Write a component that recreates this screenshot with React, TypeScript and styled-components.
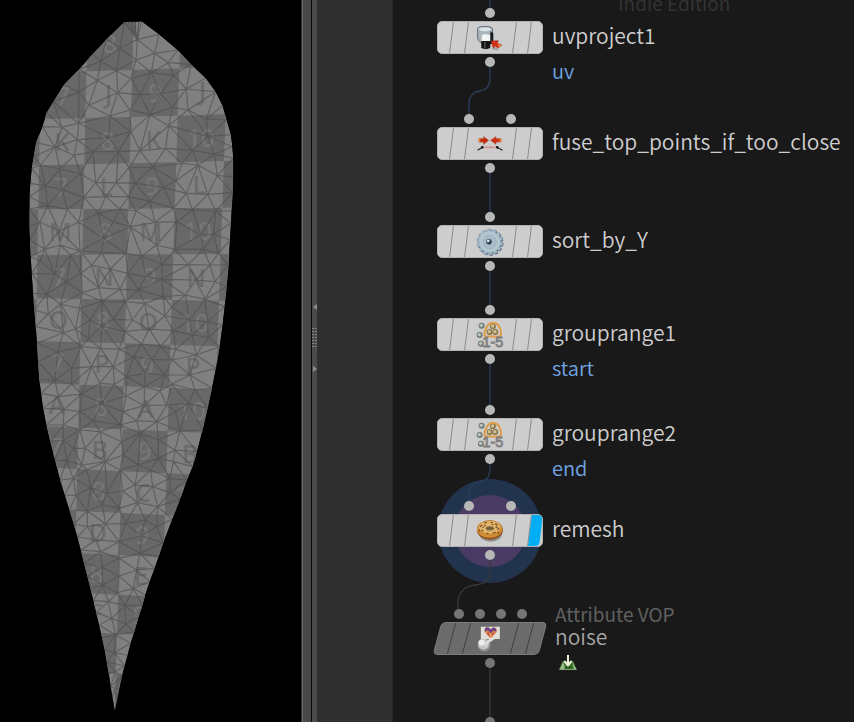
import React from "react";
import styled, { createGlobalStyle } from "styled-components";

const GlobalStyle = createGlobalStyle`
  *, *::before, *::after { box-sizing: border-box; }
  body { margin: 0; background: #000; }
`;

/* ---------- page frame ---------- */

const Page = styled.main`
  display: flex;
  min-height: 100vh;
  overflow: hidden;
  font-family: "Noto Sans CJK SC", "Noto Sans", sans-serif;
  background: #000;
`;

const Viewport = styled.section`
  flex: 301 1 0;
  min-width: 0;
  background: #000;
`;

const MeshSvg = styled.svg`
  display: block;
  width: 100%;
  height: auto;
`;

const ScrollEdge = styled.div`
  flex: none;
  width: 10px;
  background: #484848;
  border-left: 1px solid #333;
  box-shadow: inset 1px 0 #6a6a6a;
`;

const Splitter = styled.div`
  flex: none;
  display: flex;
  flex-direction: column;
  align-items: center;
  justify-content: center;
  gap: 18px;
  width: 6px;
  padding-bottom: 46px;
  background: #4b4b4b;
  border-left: 1px solid #080808;
`;

const Arrow = styled.svg`
  display: block;
  width: 4px;
  height: 6px;
  fill: #8c8c8c;
`;

const Grip = styled.svg`
  display: block;
  width: 5px;
  height: 20px;
  fill: #858585;
`;

const Gutter = styled.div`
  flex: none;
  width: 76px;
  background: #303030;
  border-right: 1px solid #262626;
`;

const Canvas = styled.section`
  position: relative;
  flex: 461 1 0;
  min-width: 0;
  overflow: hidden;
  background: #191919;
`;

/* ---------- node graph ---------- */

const Wires = styled.svg`
  position: absolute;
  left: 0;
  top: 0;
  width: 461px;
  height: 722px;
  fill: none;
`;

const Watermark = styled.span`
  position: absolute;
  left: 225px;
  top: -12px;
  font-size: 19px;
  line-height: 30px;
  color: #333;
`;

const NodeBox = styled.article<{ $x: number; $y: number }>`
  position: absolute;
  left: ${(p) => p.$x}px;
  top: ${(p) => p.$y}px;
  display: flex;
  align-items: flex-start;
  gap: 9px;
  white-space: nowrap;
`;

const NodeStack = styled.div`
  display: flex;
  flex-direction: column;
  align-items: center;
  gap: 3px;
  width: 106px;
`;

const Ports = styled.div<{ $gap: number }>`
  display: flex;
  justify-content: center;
  gap: ${(p) => p.$gap}px;
`;

const Port = styled.i<{ $dim?: boolean }>`
  width: 10px;
  height: 10px;
  border-radius: 50%;
  background: ${(p) => (p.$dim ? "#757575" : "#b7b7b7")};
`;

const Body = styled.button<{ $dim?: boolean }>`
  display: grid;
  grid-template-columns: 14px 15px 48px 15px 1fr;
  width: 106px;
  height: 33px;
  padding: 0;
  overflow: hidden;
  border: 1px solid ${(p) => (p.$dim ? "#7c7c7c" : "#b2b2b2")};
  border-radius: 5px;
  background: ${(p) => (p.$dim ? "#6b6b6b" : "#cdcdcd")};
  transform: ${(p) => (p.$dim ? "skewX(-15deg)" : "none")};
`;

const Segment = styled.span<{ $dim?: boolean; $flag?: boolean }>`
  display: flex;
  align-items: center;
  justify-content: center;
  height: 31px;
  transform: ${(p) => (p.$dim ? "none" : "skewX(-7deg)")};
  border-right: 1px solid ${(p) => (p.$dim ? "#3f3f3f" : "#8a8a8a")};
  &:last-child {
    border-right: 0;
    margin-right: ${(p) => (p.$flag ? "1px" : "0")};
    background: ${(p) => (p.$flag ? "#00aef5" : "transparent")};
    border-radius: ${(p) => (p.$flag ? "0 3px 4px 0" : "0")};
  }
`;

const IconSvg = styled.svg<{ $dim?: boolean }>`
  flex: none;
  width: 28px;
  height: 28px;
  margin-right: 1px;
  transform: ${(p) => (p.$dim ? "skewX(15deg)" : "skewX(7deg)")};
`;

const Labels = styled.div<{ $typed?: boolean }>`
  display: flex;
  flex-direction: column;
  align-items: flex-start;
  padding-left: ${(p) => (p.$typed ? "3px" : "0")};
  padding-top: ${(p) => (p.$typed ? "0" : "10px")};
  margin-top: ${(p) => (p.$typed ? "-6px" : "0")};
`;

const Name = styled.span<{ $dim?: boolean }>`
  font-size: 21px;
  font-weight: 350;
  line-height: ${(p) => (p.$dim ? "22px" : "34px")};
  color: ${(p) => (p.$dim ? "#a6a6a6" : "#cecece")};
`;

const Group = styled.span`
  margin-top: 1px;
  font-size: 20px;
  font-weight: 350;
  line-height: 36px;
  color: #70a5e4;
`;

const TypeName = styled.span`
  font-size: 19px;
  line-height: 22px;
  color: #606060;
`;

const Badge = styled.svg`
  width: 18px;
  height: 15px;
  margin: 8px 0 0 4px;
`;

/* ---------- icons ---------- */

type IconName = "project" | "fuse" | "gear" | "range" | "donut" | "vop";

const gearPath = (() => {
  const pts: string[] = [];
  const teeth = 14;
  for (let i = 0; i < teeth; i++) {
    const a = (i / teeth) * Math.PI * 2;
    const s = (Math.PI * 2) / teeth;
    [[0, 33], [0.1, 39], [0.65, 39], [0.75, 33]].forEach(([t, r]) => {
      pts.push(`${(42 + Math.cos(a + t * s) * r).toFixed(1)},${(42 + Math.sin(a + t * s) * r).toFixed(1)}`);
    });
  }
  return `M${pts.join("L")}Z`;
})();

const drawings: Record<IconName, React.ReactNode> = {
  project: (
    <>
      <path d="M5 15Q5 7 27 7Q50 7 50 16V55Q36 62 14 56Q6 50 5 42Z" fill="#a9b5bd" stroke="#56606a" strokeWidth="2.5" />
      <ellipse cx="27" cy="16" rx="20" ry="7" fill="#dce3e7" stroke="#7c8992" />
      <path d="M44 22L52 28V57L40 62Z" fill="#17191b" />
      <path d="M16 34H43V72Q29 79 16 72Z" fill="#141414" />
      <path d="M16 34Q28 28 43 34V51H16Z" fill="#f3f4f4" />
      <path d="M27 53V74" stroke="#666" strokeWidth="3" />
      <path d="M45 74L58 68L70 78Q57 80 45 74Z" fill="#8a8580" opacity=".6" />
      <path d="M45 51L67 50L64 58L78 63L66 72L58 66L52 72Z" fill="#d33119" stroke="#8e1c10" strokeWidth="1.5" />
      <path d="M66 59L78 63L68 69Z" fill="#f1893a" />
    </>
  ),
  fuse: (
    <>
      <path d="M9 26H23V20L38 31L23 43V36H9Z" fill="#c9240f" stroke="#a85832" strokeWidth="2" />
      <path d="M75 26H60V20L44 31L60 43V36H75Z" fill="#d32b12" stroke="#a85832" strokeWidth="2" />
      <path d="M7 31H13M71 31H77" stroke="#ef8b45" strokeWidth="8" />
      <path d="M5 61L21 51M61 51L80 61" stroke="#262626" strokeWidth="3.5" />
      <circle cx="19" cy="52" r="4" fill="#151515" />
      <circle cx="64" cy="52" r="4" fill="#151515" />
      <path d="M25 52H58" stroke="#df9b9b" strokeWidth="7" strokeDasharray="5 2" />
      <path d="M28 52H56" stroke="#a95555" strokeWidth="2" strokeDasharray="3 4" />
    </>
  ),
  gear: (
    <>
      <path d={gearPath} fill="#4c6076" transform="translate(2 2)" />
      <path d={gearPath} fill="#a3b7c4" stroke="#7388a0" strokeWidth="1.5" />
      <circle cx="41" cy="41" r="31" fill="#b3c5cf" />
      <circle cx="41" cy="42" r="20" fill="#a9bcc9" stroke="#8da2b2" strokeWidth="1.5" />
      <circle cx="39" cy="41" r="9" fill="#56697d" />
      <circle cx="40" cy="42" r="6" fill="#26364b" />
      <circle cx="37" cy="39" r="4" fill="#dce7ed" />
    </>
  ),
  range: (
    <>
      {[[17, 14], [11, 42], [15, 68], [51, 16], [41, 33], [58, 33]].map(([x, y], i) => (
        <g key={i}>
          <circle cx={x} cy={y} r="9" fill={i > 2 ? "#8a7748" : "#6f7b75"} />
          <circle cx={x - 1} cy={y - 1} r="5" fill={i > 2 ? "#d0c295" : "#bdc8c3"} />
        </g>
      ))}
      <path d="M28 46Q22 38 30 24Q37 4 51 5Q66 5 72 22Q80 41 70 47Z" fill="none" stroke="#df9c47" strokeWidth="6" />
      <text x="20" y="77" fontFamily="Liberation Sans, sans-serif" fontSize="43" fill="#cfcfcf" stroke="#7c7c7c" strokeWidth="3">1-5</text>
    </>
  ),
  donut: (
    <>
      <ellipse cx="44" cy="52" rx="34" ry="22" fill="#6c6c6c" opacity=".65" />
      <ellipse cx="42" cy="39" rx="39" ry="29" fill="#8f5119" />
      <ellipse cx="41" cy="36" rx="38" ry="26" fill="#cf8c36" />
      <ellipse cx="41" cy="31" rx="32" ry="19" fill="#dfb46c" />
      <ellipse cx="42" cy="34" rx="12" ry="6" fill="#75603c" />
      <path d="M32 38Q42 44 54 37L51 42Q42 46 33 42Z" fill="#c59952" />
      <path d="M12 29l7-5M17 39l5 4M25 19l8-4M31 49l7 1M51 49l8-4M64 38l5-5M58 20l7 5M44 16l6 1M20 32l4-2M9 38l3 6M69 45l-4 5M48 22l5 1M25 25l5 2M59 30l6 1" stroke="#80521f" strokeWidth="4" />
    </>
  ),
  vop: (
    <>
      <circle cx="25" cy="60" r="20" fill="#888" />
      <circle cx="23" cy="57" r="17" fill="#c2c2c2" />
      <circle cx="18" cy="53" r="9" fill="#eee" />
      <path d="M15 5H72V42H57L35 56L29 68L27 54L40 42H15Z" fill="#dfdfd8" />
      <path d="M44 39L27 22Q24 10 33 7Q41 7 44 14Q49 6 57 8Q66 14 61 24Z" fill="#d88b52" />
      <path d="M27 20Q24 9 33 7Q41 7 44 14Q49 6 57 8Q64 13 61 20L53 16L44 25L36 15Z" fill="#713e88" />
      <path d="M36 18L44 32L53 18L54 27L44 39L34 29Z" fill="#ca493f" />
      <path d="M38 25L44 31L50 25L44 38Z" fill="#f0c25c" />
    </>
  ),
};

const Icon = ({ name, dim }: { name: IconName; dim?: boolean }) => (
  <IconSvg viewBox="0 0 84 84" $dim={dim} aria-hidden="true">{drawings[name]}</IconSvg>
);

/* ---------- nodes ---------- */

interface NodeData {
  name: string;
  y: number;
  icon: IconName;
  inputs: number;
  group?: string;
  type?: string;
  flag?: boolean;
  dim?: boolean;
}

const nodes: NodeData[] = [
  { name: "uvproject1", y: 8, icon: "project", inputs: 1, group: "uv" },
  { name: "fuse_top_points_if_too_close", y: 114, icon: "fuse", inputs: 2 },
  { name: "sort_by_Y", y: 212, icon: "gear", inputs: 1 },
  { name: "grouprange1", y: 305, icon: "range", inputs: 1, group: "start" },
  { name: "grouprange2", y: 405, icon: "range", inputs: 1, group: "end" },
  { name: "remesh", y: 501, icon: "donut", inputs: 2, flag: true },
  { name: "noise", y: 609, icon: "vop", inputs: 4, type: "Attribute VOP", dim: true },
];

const GraphNode = ({ node }: { node: NodeData }) => (
  <NodeBox $x={44} $y={node.y}>
    <NodeStack>
      <Ports $gap={node.inputs === 2 ? 32 : 11}>
        {Array.from({ length: node.inputs }, (_, i) => <Port key={i} $dim={node.dim} />)}
      </Ports>
      <Body type="button" $dim={node.dim} aria-label={node.name}>
        <Segment $dim={node.dim} />
        <Segment $dim={node.dim} />
        <Segment $dim={node.dim}><Icon name={node.icon} dim={node.dim} /></Segment>
        <Segment $dim={node.dim} />
        <Segment $dim={node.dim} $flag={node.flag} />
      </Body>
      <Port $dim={node.dim} />
    </NodeStack>
    <Labels $typed={!!node.type}>
      {node.type && <TypeName>{node.type}</TypeName>}
      <Name $dim={node.dim}>{node.name}</Name>
      {node.group && <Group>{node.group}</Group>}
      {node.type && (
        <Badge viewBox="0 0 54 45" aria-hidden="true">
          <path d="M10 18H43L53 45H0Z" fill="#3b722b" />
          <path d="M2 43L13 20L19 43Z" fill="#9abb87" />
          <path d="M14 43L27 28L42 43Z" fill="#235b12" />
          <path d="M40 20L52 43H45Z" fill="#a5c790" />
          <path d="M1 43H53" stroke="#91aa85" strokeWidth="3" />
          <path d="M27 0V30M16 18L27 31L38 18" fill="none" stroke="#eef1dc" strokeWidth="6" />
        </Badge>
      )}
    </Labels>
  </NodeBox>
);

/* ---------- leaf mesh ---------- */

type Pt = [number, number];

const outline: Pt[] = [
  [373, 66], [400, 65], [425, 64], [477, 103], [533, 150], [573, 193], [617, 234], [647, 275], [668, 317],
  [680, 360], [693, 404], [697, 440], [700, 474], [700, 530], [698, 578], [695, 633], [693, 670], [690, 720],
  [686, 795], [680, 860], [674, 920], [668, 975], [659, 1040], [648, 1105], [636, 1165], [623, 1225],
  [608, 1290], [591, 1355], [578, 1400], [561, 1440], [540, 1498], [517, 1558], [490, 1628], [476, 1670],
  [464, 1705], [449, 1745], [436, 1785], [427, 1817], [416, 1850], [403, 1895], [392, 1930], [383, 1965],
  [374, 1998], [366, 2028], [358, 2065], [351, 2100], [344, 2132], [338, 2096], [332, 2060], [326, 2020],
  [320, 1985], [314, 1950], [306, 1913], [297, 1875], [288, 1838], [280, 1802], [271, 1765], [262, 1729],
  [252, 1690], [242, 1650], [232, 1611], [221, 1572], [208, 1530], [194, 1485], [180, 1440], [165, 1380],
  [151, 1325], [139, 1275], [129, 1225], [123, 1180], [118, 1140], [114, 1085], [111, 1030], [107, 980],
  [103, 930], [99, 880], [95, 820], [92, 770], [90, 720], [88, 680], [88, 627], [88, 590], [91, 550],
  [95, 505], [101, 470], [108, 428], [127, 380], [140, 338], [160, 305], [192, 254], [237, 208],
  [278, 162], [320, 118],
];

const inner: Pt[] = [
  [412, 118], [360, 144], [408, 180], [464, 160], [302, 184], [505, 188], [350, 212], [292, 241], [393, 236],
  [454, 218], [521, 226], [237, 276], [353, 278], [482, 281], [559, 267], [420, 284], [266, 316], [389, 330],
  [517, 322], [186, 381], [236, 370], [330, 348], [450, 344], [564, 330], [619, 357], [506, 377], [393, 395],
  [327, 413], [232, 419], [165, 441], [623, 409], [578, 451], [497, 445], [420, 452], [355, 455], [279, 455],
  [223, 466], [643, 463], [122, 495], [241, 521], [387, 503], [458, 501], [546, 490], [594, 495], [652, 527],
  [180, 507], [136, 558], [186, 568], [287, 548], [349, 548], [405, 550], [490, 562], [527, 543], [252, 592],
  [317, 590], [559, 580], [623, 583], [385, 590], [450, 604], [143, 617], [202, 628], [295, 640], [360, 627],
  [408, 633], [520, 625], [578, 630], [647, 633], [120, 667], [236, 667], [178, 692], [340, 665], [391, 680],
  [465, 667], [531, 665], [603, 705], [641, 702],
  [134, 748], [180, 735], [240, 753], [310, 715], [305, 758], [378, 760], [425, 768], [470, 735], [525, 748],
  [610, 748], [655, 760], [565, 794], [487, 793], [630, 795], [120, 782], [212, 765], [165, 822],
  [275, 796], [331, 807], [383, 820], [243, 820], [437, 830], [485, 838], [587, 840], [645, 845], [200, 845],
  [360, 868], [296, 863], [247, 878], [140, 882], [415, 870], [490, 890], [556, 885], [615, 898], [182, 912],
  [238, 925], [306, 904], [376, 905], [435, 910], [145, 942], [270, 960], [340, 958], [397, 960], [495, 948],
  [515, 920], [568, 960], [622, 965], [227, 987], [190, 998], [305, 978], [265, 1017], [375, 995], [447, 987],
  [520, 992], [577, 1005], [625, 1012], [173, 1056], [215, 1105], [243, 1040],
  [302, 1045], [357, 1048], [425, 1032], [482, 1040], [527, 1048], [588, 1065], [516, 1080], [455, 1078],
  [402, 1070], [275, 1100], [340, 1100], [435, 1120], [380, 1130], [495, 1125], [570, 1125], [165, 1140],
  [215, 1152], [300, 1150], [343, 1153], [245, 1182], [175, 1190], [305, 1210], [378, 1188], [433, 1160],
  [480, 1173], [515, 1152], [500, 1215], [433, 1217], [565, 1210], [585, 1170], [370, 1235], [240, 1235],
  [192, 1228], [280, 1262], [410, 1262], [360, 1275], [470, 1265], [527, 1235], [540, 1293], [190, 1275],
  [240, 1290], [300, 1295], [365, 1325], [420, 1300], [475, 1320], [525, 1350], [220, 1345], [255, 1345],
  [190, 1320], [315, 1385], [370, 1365], [415, 1395], [475, 1375], [520, 1385], [245, 1395], [200, 1382],
  [260, 1410], [360, 1410], [220, 1435], [510, 1435], [452, 1410],
  [228, 1486], [273, 1463], [320, 1480], [368, 1473], [405, 1455], [458, 1460], [510, 1478], [413, 1508],
  [473, 1520], [357, 1525], [307, 1515], [262, 1533], [435, 1560], [317, 1572], [377, 1570], [262, 1580],
  [470, 1580], [424, 1608], [357, 1625], [288, 1620], [420, 1660], [302, 1655], [357, 1675], [307, 1702],
  [410, 1710], [357, 1728], [400, 1765], [308, 1755], [353, 1778], [325, 1805], [375, 1817], [335, 1855],
  [377, 1872], [347, 1905], [343, 1958], [346, 2015], [344, 2065],
];

/* Bowyer-Watson triangulation; returns the unique edges as one path.
   The first `rim` points form the silhouette, whose own edges stay undrawn. */
function triangulate(source: Pt[], rim: number): string {
  const pts: Pt[] = [...source, [-9000, -9000], [9900, -9000], [450, 20000]];
  const n = source.length;
  const circle = (a: number, b: number, c: number) => {
    const [ax, ay] = pts[a], [bx, by] = pts[b], [cx, cy] = pts[c];
    const d = 2 * (ax * (by - cy) + bx * (cy - ay) + cx * (ay - by)) || 1e-9;
    const A = ax * ax + ay * ay, B = bx * bx + by * by, C = cx * cx + cy * cy;
    const x = (A * (by - cy) + B * (cy - ay) + C * (ay - by)) / d;
    const y = (A * (cx - bx) + B * (ax - cx) + C * (bx - ax)) / d;
    return { v: [a, b, c], x, y, r: (ax - x) ** 2 + (ay - y) ** 2 };
  };
  let tris = [circle(n, n + 1, n + 2)];
  for (let i = 0; i < n; i++) {
    const [x, y] = pts[i];
    const open = new Map<string, [number, number]>();
    tris = tris.filter((t) => {
      if ((x - t.x) ** 2 + (y - t.y) ** 2 >= t.r) return true;
      for (let k = 0; k < 3; k++) {
        const a = t.v[k], b = t.v[(k + 1) % 3];
        const key = a < b ? `${a}-${b}` : `${b}-${a}`;
        if (open.has(key)) open.delete(key);
        else open.set(key, [a, b]);
      }
      return false;
    });
    open.forEach(([a, b]) => tris.push(circle(a, b, i)));
  }
  const edges = new Set<string>();
  tris.forEach(({ v }) => {
    if (v.some((k) => k >= n)) return;
    for (let k = 0; k < 3; k++) {
      const a = Math.min(v[k], v[(k + 1) % 3]), b = Math.max(v[k], v[(k + 1) % 3]);
      const gap = Math.min(b - a, rim - (b - a));
      if (b < rim && gap <= 3) continue;
      edges.add(`M${pts[a].join(" ")}L${pts[b].join(" ")}`);
    }
  });
  return [...edges].join("");
}

const meshPath = triangulate([...outline, ...inner], outline.length);
const outlinePath = `M${outline.map((p) => p.join(" ")).join("L")}Z`;

const columns: Pt[] = [[-20, -50], [125, 88], [263, 216], [401, 345], [543, 476], [688, 612], [830, 760]];
const rows: Pt[] = [
  [60, 40], [219, 203], [358, 345], [496, 485], [628, 624], [765, 762], [895, 901], [1023, 1037],
  [1150, 1167], [1278, 1298], [1402, 1425], [1528, 1550], [1652, 1678], [1773, 1795], [1890, 1912],
  [2013, 2030], [2140, 2150],
];

const corner = (c: number, r: number): Pt => {
  const t = (rows[r][0] - 60) / 2040;
  const x = columns[c][0] + (columns[c][1] - columns[c][0]) * t;
  const y = rows[r][0] + ((rows[r][1] - rows[r][0]) * (x - 120)) / 480;
  return [Math.round(x), Math.round(y)];
};

const letters = "JKLMNOPABCDEF";
const cells = rows.slice(1).flatMap((_, r) =>
  columns.slice(1).map((__, c) => {
    const q = [corner(c, r), corner(c + 1, r), corner(c + 1, r + 1), corner(c, r + 1)];
    const dark = (c + r) % 2 === 0;
    const inside = c >= 1 && c <= 4 && !(r === 0 && c !== 2);
    const text = dark ? String(c + 6) : letters[r - 1] ?? "";
    return {
      q, dark, text: inside && r < 14 ? text : "",
      x: (q[0][0] + q[2][0]) / 2,
      y: (q[0][1] + q[2][1]) / 2,
    };
  })
);

const LeafMesh = () => (
  <MeshSvg viewBox="0 0 903 2166" role="img" aria-label="Leaf mesh">
    <defs><clipPath id="leaf"><path d={outlinePath} /></clipPath></defs>
    <g clipPath="url(#leaf)">
      <path d={outlinePath} fill="#808080" />
      {cells.filter((c) => c.dark).map((c, i) => (
        <polygon key={i} points={c.q.map((p) => p.join(",")).join(" ")} fill="#686868" />
      ))}
      {cells.filter((c) => c.text).map((c, i) => (
        <text key={i} x={c.x} y={c.y + 27} textAnchor="middle" fontSize="74"
          fontFamily="Noto Sans, sans-serif" fontWeight="500" fill={c.dark ? "#767676" : "#6b6b6b"}>
          {c.text}
        </text>
      ))}
      <path d={meshPath} fill="none" stroke="#505050" strokeOpacity=".68" strokeWidth="3.5" />
      <path d="M375 68L412 118M385 66L405 105M395 66L407 105M406 66L408 105M416 66L412 118" stroke="#505050" strokeWidth="3" />
    </g>
  </MeshSvg>
);

export default function App() {
  return (
    <>
      <GlobalStyle />
      <Page>
        <Viewport><LeafMesh /></Viewport>
        <ScrollEdge />
        <Splitter>
          <Arrow viewBox="0 0 4 6"><path d="M4 0V6L0 3Z" /></Arrow>
          <Grip viewBox="0 0 5 20">
            {Array.from({ length: 7 }, (_, i) => (
              <path key={i} d={`M0 ${i * 3}h2v1H0ZM3 ${i * 3}h2v1H3Z`} />
            ))}
          </Grip>
          <Arrow viewBox="0 0 4 6"><path d="M0 0V6L4 3Z" /></Arrow>
        </Splitter>
        <Gutter />
        <Canvas>
          <Wires viewBox="0 0 461 722" aria-hidden="true">
            <circle cx="97" cy="531" r="52" fill="#22334d" />
            <circle cx="97" cy="531" r="36" fill="#4a3b64" />
            <g stroke="#2b3f5d" strokeWidth="1.3">
              <path d="M97 0V10M97 62V79C97 87 93 90 87 91C80 92 76 97 76 104V119" />
              <path d="M97 168V217M97 266V310M97 359V410" />
              <path d="M97 459V468C97 478 93 481 87 482C80 483 76 488 76 495V506" />
            </g>
            <path d="M97 555V572C97 581 91 584 82 585C71 586 65 593 65 604V614M97 663V722" stroke="#3a3a3a" strokeWidth="1.3" />
            <circle cx="97" cy="722" r="5" fill="#757575" />
          </Wires>
          <Watermark>Indie Edition</Watermark>
          {nodes.map((n) => <GraphNode key={n.name} node={n} />)}
        </Canvas>
      </Page>
    </>
  );
}
